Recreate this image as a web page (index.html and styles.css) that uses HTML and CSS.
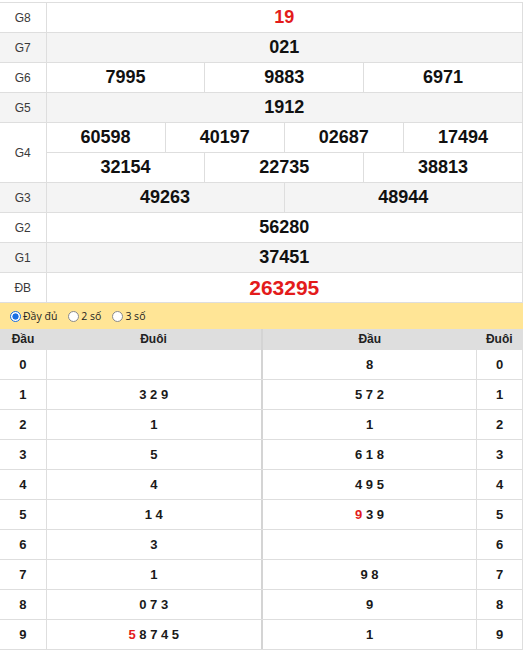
FILE: index.html
```html
<!DOCTYPE html>
<html lang="vi">
<head>
<meta charset="utf-8">
<title>KQXS</title>
<link rel="stylesheet" href="styles.css">
</head>
<body>
<div class="board">
  <table class="prizes">
    <colgroup><col class="c-label"><col span="12"></colgroup>
    <tr><td class="label">G8</td><td colspan="12" class="num red">19</td></tr>
    <tr class="alt"><td class="label">G7</td><td colspan="12" class="num">021</td></tr>
    <tr><td class="label">G6</td><td colspan="4" class="num">7995</td><td colspan="4" class="num">9883</td><td colspan="4" class="num">6971</td></tr>
    <tr class="alt"><td class="label">G5</td><td colspan="12" class="num">1912</td></tr>
    <tr><td class="label" rowspan="2">G4</td><td colspan="3" class="num">60598</td><td colspan="3" class="num">40197</td><td colspan="3" class="num">02687</td><td colspan="3" class="num">17494</td></tr>
    <tr><td colspan="4" class="num">32154</td><td colspan="4" class="num">22735</td><td colspan="4" class="num">38813</td></tr>
    <tr class="alt"><td class="label">G3</td><td colspan="6" class="num">49263</td><td colspan="6" class="num">48944</td></tr>
    <tr><td class="label">G2</td><td colspan="12" class="num">56280</td></tr>
    <tr class="alt"><td class="label">G1</td><td colspan="12" class="num">37451</td></tr>
    <tr><td class="label">ĐB</td><td colspan="12" class="num red db">263295</td></tr>
  </table>

  <div class="opts">
    <label class="opt"><span class="radio on"></span>Đầy đủ</label>
    <label class="opt"><span class="radio"></span>2 số</label>
    <label class="opt"><span class="radio"></span>3 số</label>
  </div>

  <div class="loto">
    <table class="lt lt-left">
      <colgroup><col class="c-side"><col></colgroup>
      <thead><tr><th>Đầu</th><th>Đuôi</th></tr></thead>
      <tbody>
        <tr><td>0</td><td></td></tr>
        <tr><td>1</td><td>3 2 9</td></tr>
        <tr><td>2</td><td>1</td></tr>
        <tr><td>3</td><td>5</td></tr>
        <tr><td>4</td><td>4</td></tr>
        <tr><td>5</td><td>1 4</td></tr>
        <tr><td>6</td><td>3</td></tr>
        <tr><td>7</td><td>1</td></tr>
        <tr><td>8</td><td>0 7 3</td></tr>
        <tr><td>9</td><td><span class="red">5</span> 8 7 4 5</td></tr>
      </tbody>
    </table>
    <table class="lt lt-right">
      <colgroup><col><col class="c-side"></colgroup>
      <thead><tr><th>Đầu</th><th>Đuôi</th></tr></thead>
      <tbody>
        <tr><td>8</td><td>0</td></tr>
        <tr><td>5 7 2</td><td>1</td></tr>
        <tr><td>1</td><td>2</td></tr>
        <tr><td>6 1 8</td><td>3</td></tr>
        <tr><td>4 9 5</td><td>4</td></tr>
        <tr><td><span class="red">9</span> 3 9</td><td>5</td></tr>
        <tr><td></td><td>6</td></tr>
        <tr><td>9 8</td><td>7</td></tr>
        <tr><td>9</td><td>8</td></tr>
        <tr><td>1</td><td>9</td></tr>
      </tbody>
    </table>
  </div>
</div>
</body>
</html>
```

FILE: styles.css
```css
body {
  margin: 0;
  background: #fff;
  font-family: "Liberation Sans", Arial, sans-serif;
  color: #222;
}

.board {
  width: 523px;
  padding-top: 2px;
}

.prizes {
  width: 523px;
  border-collapse: collapse;
  table-layout: fixed;
}

.prizes tr {
  height: 30px;
}

.prizes td {
  border: 1px solid #dedede;
  padding: 0;
  text-align: center;
  vertical-align: middle;
}

.prizes td.label {
  border-left: 0;
  font-size: 12px;
  color: #3a3a3a;
}

.c-label {
  width: 46px;
}

.num {
  font-size: 18px;
  font-weight: bold;
  color: #111;
}

.red {
  color: #e31b1b;
}

.prizes .db {
  font-size: 21px;
}

.alt td {
  background: #f4f4f4;
}

.opts {
  height: 26px;
  background: #ffe596;
  display: flex;
  align-items: center;
  padding-left: 10px;
  font-family: "Open Sans", "Liberation Sans", sans-serif;
  font-size: 10.5px;
  color: #222;
}

.opt {
  display: flex;
  align-items: center;
  margin-right: 11px;
}

.radio {
  width: 11px;
  height: 11px;
  box-sizing: border-box;
  border: 1px solid #8a8a8a;
  border-radius: 50%;
  background: #fff;
  margin-right: 2px;
}

.radio.on {
  border-color: #1a6fe3;
  background: radial-gradient(circle, #1a6fe3 0 2.8px, #fff 3.4px);
}

.loto {
  display: flex;
}

.lt {
  border-collapse: collapse;
  table-layout: fixed;
}

.lt-left {
  width: 262px;
}

.lt-right {
  width: 261px;
}

.c-side {
  width: 46px;
}

.lt th {
  height: 20px;
  padding: 0;
  background: #dedede;
  font-size: 12px;
  font-weight: bold;
  color: #222;
  text-align: center;
  vertical-align: middle;
  border: 0;
}

.lt-left th:last-child {
  border-right: 1px solid #d4d4d4;
}

.lt-right th:first-child {
  border-left: 1px solid #d4d4d4;
}

.lt-right th:last-child {
  border-right: 1px solid #dedede;
}

.lt td {
  height: 29px;
  padding: 0;
  border: 1px solid #dedede;
  font-size: 13px;
  font-weight: bold;
  color: #1a1a1a;
  text-align: center;
  vertical-align: middle;
}

.lt-left td:first-child {
  border-left: 0;
}

.lt-left td:last-child {
  border-right-color: #d4d4d4;
}

.lt-right td:first-child {
  border-left-color: #d4d4d4;
}
```
